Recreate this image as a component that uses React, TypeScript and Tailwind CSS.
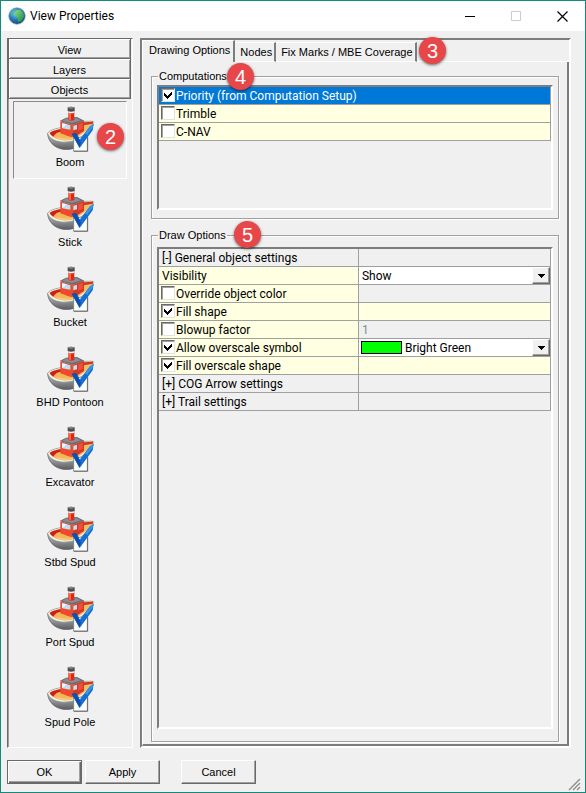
import { useState } from "react";
import clsx from "clsx";

interface PropertyRow {
  id: string;
  label: string;
  type: "group" | "text" | "check";
  checked?: boolean;
  value?: "visibility" | "color" | "factor";
  plain?: boolean;
}

const sections = ["View", "Layers", "Objects"];

const objects = ["Boom", "Stick", "Bucket", "BHD Pontoon", "Excavator", "Stbd Spud", "Port Spud", "Spud Pole"];

const tabs = ["Drawing Options", "Nodes", "Fix Marks / MBE Coverage"];

const computations = [
  { label: "Priority (from Computation Setup)", checked: true },
  { label: "Trimble", checked: false },
  { label: "C-NAV", checked: false },
];

const properties: PropertyRow[] = [
  { id: "general", label: "[-] General object settings", type: "group" },
  { id: "visibility", label: "Visibility", type: "text", value: "visibility" },
  { id: "override", label: "Override object color", type: "check", plain: true },
  { id: "fill", label: "Fill shape", type: "check", checked: true },
  { id: "blowup", label: "Blowup factor", type: "check", value: "factor", plain: true },
  { id: "overscale", label: "Allow overscale symbol", type: "check", checked: true, value: "color" },
  { id: "fillOverscale", label: "Fill overscale shape", type: "check", checked: true },
  { id: "cog", label: "[+] COG Arrow settings", type: "group" },
  { id: "trail", label: "[+] Trail settings", type: "group" },
];

function Badge({ children, className }: { children: string; className: string }) {
  return (
    <span
      className={clsx(
        "absolute z-10 flex size-[27px] items-center justify-center rounded-full bg-[#e8474a] font-['Liberation_Sans',sans-serif] text-[20px] leading-none text-white shadow-[0_1px_3px_rgba(0,0,0,0.6)]",
        className
      )}
    >
      {children}
    </span>
  );
}

function GlobeIcon() {
  return (
    <svg viewBox="0 0 18 18" className="size-[18px]" aria-hidden="true">
      <defs>
        <radialGradient id="sea" cx="0.4" cy="0.35" r="0.65">
          <stop offset="0" stopColor="#7ccbe8" />
          <stop offset="0.5" stopColor="#2b83c4" />
          <stop offset="1" stopColor="#15467f" />
        </radialGradient>
        <linearGradient id="land" x1="0" y1="0" x2="1" y2="1">
          <stop offset="0" stopColor="#8ee07a" />
          <stop offset="1" stopColor="#158a4c" />
        </linearGradient>
      </defs>
      <circle cx="9" cy="9" r="8.3" fill="url(#sea)" stroke="#9aa7b5" strokeWidth="0.7" />
      <path d="M8 3.5 12 2.5 15.5 6 16 10 13.5 14 10.5 15 9.5 11 6.5 8.5Z" fill="url(#land)" />
      <path d="M2 6 5 2.5 8 2 5.5 5.5 3.5 9Z" fill="#58b98d" opacity="0.7" />
    </svg>
  );
}

function BoatIcon() {
  return (
    <svg viewBox="18 21 141 138" className="h-[46px] w-[47px]" aria-hidden="true">
      <defs>
        <linearGradient id="hull" x1="0" y1="0" x2="0" y2="1">
          <stop offset="0" stopColor="#c4c5c7" />
          <stop offset="0.5" stopColor="#8e9093" />
          <stop offset="1" stopColor="#595b5f" />
        </linearGradient>
      </defs>
      <path d="M20 104C21 126 38 146 66 151Q84 153 100 148V120H40Z" fill="url(#hull)" stroke="#55575b" strokeWidth="2" />
      <path d="M20 103Q23 93 58 86L128 67 157 67Q158 82 147 93L110 121Q88 132 62 129C40 127 24 117 20 103Z" fill="#f4f3f0" stroke="#8a8a8a" strokeWidth="2" />
      <path d="M26 103Q31 94 59 90L128 72 153 71Q153 84 143 91L107 116Q88 127 65 124 36 121 26 103Z" fill="#efb85c" />
      <path d="M26 103Q30 95 60 90V98Q44 99 37 113 29 109 26 103Z" fill="#cf1f1b" />
      <path d="M128 72 153 70Q153 78 148 84L128 96Z" fill="#f2bf66" />
      <path d="M128 70 156 68V74L128 79Z" fill="#d9341c" />
      <path d="M40 112Q60 122 96 116L108 106V115Q88 125 66 123 49 120 40 112Z" fill="#f8cd7b" />
      <path d="M58 67 94 77V115L78 110 58 103Z" fill="#f04a2a" />
      <path d="M94 77 129 66V96L104 112 94 115Z" fill="#dd3620" />
      <path d="M63 73 88 79V92L63 88Z" fill="#b9e2f4" />
      <path d="M63 73 78 76 63 87Z" fill="#eaf8fe" />
      <path d="M97 80 108 77V91L97 94Z" fill="#b9e2f4" />
      <path d="M112 76 125 71V89L112 95Z" fill="#e9513a" />
      <path d="M56 66 75 56 108 54 130 65 94 77Z" fill="#686a6f" />
      <path d="M64 65 77 58 107 57 121 64 94 72Z" fill="#8b8d92" />
      <path d="M82 35H100V63Q91 67 82 63Z" fill="#d92c18" />
      <path d="M84 40H90V63H84Z" fill="#fa6445" />
      <path d="M82 36H100V41Q91 44 82 41Z" fill="#f4eeee" />
      <path d="M80 25Q90 21 101 25V36Q90 40 80 36Z" fill="#4a4c51" />
      <ellipse cx="90" cy="26" rx="9" ry="3" fill="#85878c" />
      <path d="M98 115H139V156H98Z" fill="#fff" stroke="#6b6e73" strokeWidth="2" />
      <path d="M98 157H140V114" fill="none" stroke="#45484c" strokeWidth="2" />
      <path d="M92 104 106 102 116 122 147 82 158 74 155 94 116 147Z" fill="#156fd2" />
      <path d="M92 104 106 102 116 122 119 131 116 147Z" fill="#0c50b4" />
      <path d="M132 103 147 83 157 76 156 84 138 108Z" fill="#3795e8" />
    </svg>
  );
}

function CheckBox({ id, defaultChecked }: { id: string; defaultChecked?: boolean }) {
  return (
    <span className="grid size-[14px] shrink-0">
      <input
        id={id}
        type="checkbox"
        defaultChecked={defaultChecked}
        className="peer col-start-1 row-start-1 size-[14px] appearance-none border border-t-[#696969] border-r-[#e3e3e3] border-b-[#e3e3e3] border-l-[#696969] bg-white shadow-[inset_1px_1px_0_#a0a0a0]"
      />
      <svg
        viewBox="0 0 14 14"
        className="pointer-events-none invisible col-start-1 row-start-1 size-[14px] peer-checked:visible"
        shapeRendering="crispEdges"
        aria-hidden="true"
      >
        <path d="M3 5H4V6H5V7H6V8H7V7H8V6H9V5H10V4H11V7H10V8H9V9H8V10H7V11H6V10H5V9H4V8H3Z" fill="#000" />
      </svg>
    </span>
  );
}

function DropDown({ label, options }: { label: string; options: string[] }) {
  return (
    <div className="relative h-[17px] min-w-0 grow">
      <select aria-label={label} className="block h-[17px] w-full appearance-none bg-white pt-px pl-[3px] leading-[16px] outline-none">
        {options.map((option) => (
          <option key={option}>{option}</option>
        ))}
      </select>
      <span className="pointer-events-none absolute top-0 right-0 flex h-[17px] w-[18px] items-center justify-center border border-t-white border-r-[#696969] border-b-[#696969] border-l-white bg-[#f0f0f0] shadow-[inset_-1px_-1px_0_#a0a0a0]">
        <svg viewBox="0 0 7 4" className="h-[4px] w-[7px]" shapeRendering="crispEdges" aria-hidden="true">
          <path d="M0 0H7V1H6V2H5V3H4V4H3V3H2V2H1V1H0Z" fill="#000" />
        </svg>
      </span>
    </div>
  );
}

function PropertyValue({ value }: { value?: PropertyRow["value"] }) {
  if (value === "visibility") {
    return <DropDown label="Visibility" options={["Show", "Hide"]} />;
  }

  if (value === "color") {
    return (
      <div className="flex items-center bg-white pl-[2px]">
        <span className="h-[13px] w-[41px] shrink-0 border border-black bg-[#00ff00]" />
        <DropDown label="Overscale symbol color" options={["Bright Green", "Red", "Blue"]} />
      </div>
    );
  }

  if (value === "factor") {
    return <input aria-label="Blowup factor value" disabled defaultValue="1" className="block h-[17px] w-full bg-transparent pt-px pl-[3px] text-[#829082]" />;
  }

  return null;
}

const listFrame =
  "border-2 border-t-[#7d7d7d] border-r-white border-b-white border-l-[#7d7d7d] font-[Roboto,sans-serif] text-[12px] leading-[17px]";
const groupFrame =
  "min-w-0 border border-[#a0a0a0] px-[5px] shadow-[1px_1px_0_#fff,inset_1px_1px_0_#fff]";
const cell = "h-[18px] border-r border-b border-[#a0a0a0] p-0";
const checkCell = "flex h-[17px] items-start gap-px pt-px pl-[2px]";
const pushButton =
  "h-[24px] w-[75px] border border-t-white border-r-[#696969] border-b-[#696969] border-l-white shadow-[inset_-1px_-1px_0_#a0a0a0]";

function App() {
  const [activeObject, setActiveObject] = useState("Boom");
  const [activeTab, setActiveTab] = useState("Drawing Options");
  const [activeRow, setActiveRow] = useState(0);

  return (
    <div className="flex min-h-screen flex-col border border-[#16897d] bg-[#f0f0f0] font-['Liberation_Sans',Arial,sans-serif] text-[11px] leading-[14px] text-black">
      <header className="flex h-[30px] items-center justify-between bg-white">
        <div className="flex items-center gap-[4px] pl-[7px]">
          <GlobeIcon />
          <h1 className="font-[Roboto,sans-serif] text-[12px]">View Properties</h1>
        </div>

        <div className="flex h-full">
          <button aria-label="Minimize" className="flex w-[46px] items-center justify-center">
            <svg viewBox="0 0 11 11" className="size-[11px]" aria-hidden="true">
              <path d="M0 5.5H10" stroke="#000" />
            </svg>
          </button>
          <button aria-label="Maximize" disabled className="flex w-[46px] items-center justify-center">
            <svg viewBox="0 0 11 11" className="size-[11px]" aria-hidden="true">
              <path d="M.5.5H9.5V9.5H.5Z" fill="none" stroke="#ccc" />
            </svg>
          </button>
          <button aria-label="Close" className="flex w-[46px] items-center justify-center">
            <svg viewBox="0 0 11 11" className="size-[11px]" aria-hidden="true">
              <path d="M.5.5 10.5 10.5M10.5.5.5 10.5" stroke="#000" strokeWidth="1.2" />
            </svg>
          </button>
        </div>
      </header>

      <main className="flex grow gap-[7px] pt-[7px] pr-[14px] pl-[6px]">
        <nav className="flex w-[126px] shrink-0 flex-col border border-t-[#696969] border-r-white border-b-white border-l-[#696969] shadow-[inset_1px_0_0_#a0a0a0]">
          {sections.map((section) => (
            <button
              key={section}
              className="mr-px h-[20px] border-r border-b border-l border-[#696969] pt-[2px] shadow-[inset_1px_1px_0_#fff,inset_-1px_-1px_0_#a0a0a0]"
            >
              {section}
            </button>
          ))}

          <div className="flex flex-col gap-[2px] px-[5px] pt-[2px]">
            {objects.map((item) => (
              <button
                key={item}
                onClick={() => setActiveObject(item)}
                className={clsx(
                  "relative flex h-[78px] flex-col items-center gap-[3px] border pt-[4px]",
                  activeObject === item
                    ? "border-t-[#8a8a8a] border-r-white border-b-white border-l-[#8a8a8a]"
                    : "border-transparent"
                )}
              >
                <BoatIcon />
                <span>{item}</span>
                {item === "Boom" && <Badge className="top-[21px] right-[2px]">2</Badge>}
              </button>
            ))}
          </div>
        </nav>

        <section className="flex min-w-0 grow flex-col border-2 border-t-[#7d7d7d] border-r-white border-b-white border-l-[#7d7d7d]">
          <div role="tablist" className="relative flex h-[22px] items-end">
            {tabs.map((tab) => (
              <button
                key={tab}
                role="tab"
                aria-selected={activeTab === tab}
                onClick={() => setActiveTab(tab)}
                className={clsx(
                  "border-t border-r-2 border-t-white border-r-[#7d7d7d] whitespace-nowrap",
                  activeTab === tab
                    ? "h-[22px] border-l border-l-white pr-[3px] pb-[3px] pl-[6px]"
                    : "h-[20px] border-b border-b-white pr-[2px] pl-[5px]"
                )}
              >
                {tab}
              </button>
            ))}
            <span className="h-px grow bg-white" />
            <Badge className="top-[-3px] left-[277px]">3</Badge>
          </div>

          <div className="flex grow flex-col gap-[8px] border-r-2 border-b-2 border-l border-r-[#7d7d7d] border-b-[#7d7d7d] border-l-white px-[8px] pt-[6px] pb-[2px]">
            <fieldset className={clsx(groupFrame, "relative pb-[8px]")}>
              <legend className="ml-px h-[16px] px-px leading-[16px]">Computations</legend>
              <Badge className="top-[-21px] left-[75px]">4</Badge>
              <div className="pt-px">
                <div className={clsx(listFrame, "h-[125px]")}>
                  <table className="w-full table-fixed border-separate border-spacing-0">
                    <tbody>
                      {computations.map((item, index) => (
                        <tr
                          key={item.label}
                          onClick={() => setActiveRow(index)}
                          className={activeRow === index ? "bg-[#0078d7] text-white" : "bg-[#ffffe1]"}
                        >
                          <td className={cell}>
                            <div className={checkCell}>
                              <CheckBox id={item.label} defaultChecked={item.checked} />
                              <label htmlFor={item.label}>{item.label}</label>
                            </div>
                          </td>
                        </tr>
                      ))}
                    </tbody>
                  </table>
                </div>
              </div>
            </fieldset>

            <fieldset className={clsx(groupFrame, "relative grow pb-[12px]")}>
              <legend className="ml-px h-[16px] px-px leading-[16px]">Draw Options</legend>
              <Badge className="top-[-22px] left-[82px]">5</Badge>
              <div className="h-full pt-[4px]">
                <div className={clsx(listFrame, "h-full")}>
                  <table className="w-full table-fixed border-separate border-spacing-0">
                    <colgroup>
                      <col className="w-[51%]" />
                      <col />
                    </colgroup>
                    <tbody>
                      {properties.map((row) => (
                        <tr key={row.id} className={row.type === "group" ? "bg-[#f0f0f0]" : "bg-[#ffffe1]"}>
                          <td className={cell}>
                            {row.type === "check" ? (
                              <div className={checkCell}>
                                <CheckBox id={row.id} defaultChecked={row.checked} />
                                <label htmlFor={row.id}>{row.label}</label>
                              </div>
                            ) : (
                              <div className="h-[17px] pt-px pl-[3px]">{row.label}</div>
                            )}
                          </td>
                          <td className={clsx(cell, row.plain && "bg-[#f0f0f0]")}>
                            <PropertyValue value={row.value} />
                          </td>
                        </tr>
                      ))}
                    </tbody>
                  </table>
                </div>
              </div>
            </fieldset>
          </div>
        </section>
      </main>

      <footer className="flex items-end justify-between pt-[12px] pr-[4px] pl-[6px]">
        <div className="mb-[8px] flex">
          <button className="h-[24px] w-[75px] border border-[#696969] shadow-[inset_1px_1px_0_#fff,inset_-1px_-1px_0_#696969,inset_-2px_-2px_0_#a0a0a0]">OK</button>
          <button className={clsx(pushButton, "ml-[3px]")}>Apply</button>
          <button className={clsx(pushButton, "ml-[21px]")}>Cancel</button>
        </div>
        <svg viewBox="0 0 13 13" className="mb-px size-[13px]" aria-hidden="true">
          <path d="M1 12 12 1M5 12 12 5M9 12 12 9" stroke="#909090" strokeWidth="1.5" />
          <path d="M2.5 12.5 12.5 2.5M6.5 12.5 12.5 6.5" stroke="#fff" strokeWidth="0.8" />
        </svg>
      </footer>
    </div>
  );
}

export default App;
